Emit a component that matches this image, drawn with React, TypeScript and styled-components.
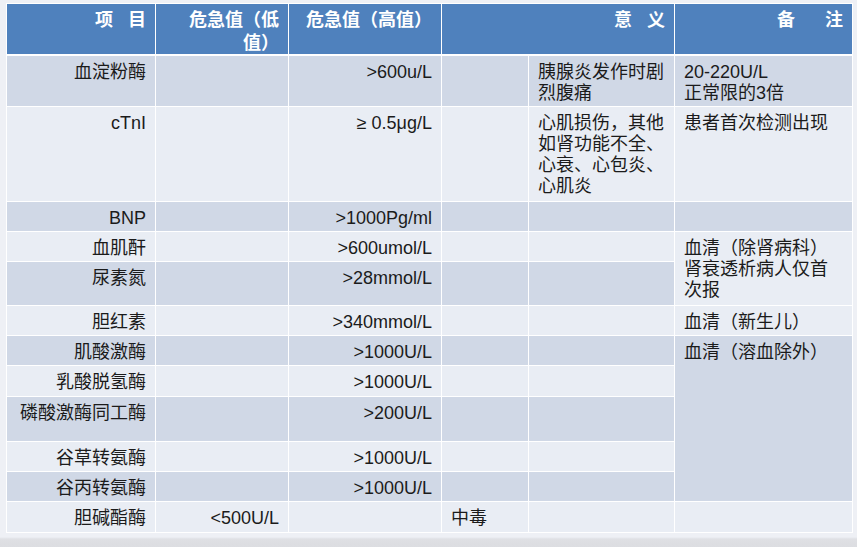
import React from 'react';
import styled, { createGlobalStyle } from 'styled-components';

// ─── Global ────────────────────────────────────────────────────────────────────
const GlobalStyle = createGlobalStyle`
  html, body {
    margin: 0;
    padding: 0;
  }
  body {
    min-height: 547px;
    background: linear-gradient(to bottom, #eef0f5 0, #eef0f5 537px, #dfe0e4 539px, #dcdde1 100%);
    font-family: "Liberation Sans", "Noto Sans CJK SC", sans-serif;
    color: #1b1b1b;
  }
`;

// ─── Layout ────────────────────────────────────────────────────────────────────
const Sheet = styled.div`
  margin: 3px 0 0 6px;
  width: 845px;
  padding: 1px;
  background: #ffffff;
`;

const Grid = styled.div`
  display: grid;
  grid-template-columns: 148px 132px 152px 86px 145px 177px;
  grid-template-rows: 51px 50px 94px 29px 29px 43px 29px 29px 30px 44px 29px 29px 30px;
  gap: 1px;
`;

// ─── Cells ─────────────────────────────────────────────────────────────────────
type Tone = 'head' | 'dark' | 'light';

const toneBg: Record<Tone, string> = {
  head: '#4f81bd',
  dark: '#d0d8e6',
  light: '#e9edf4',
};

const HeadCell = styled.div<{ $span?: number }>`
  grid-column: span ${(p) => p.$span ?? 1};
  height: 50px;
  box-sizing: border-box;
  padding: 5px 9px 0 9px;
  background: ${toneBg.head};
  color: #ffffff;
  font-size: 18px;
  font-weight: 700;
  line-height: 23px;
  text-align: right;
  white-space: pre-wrap;
`;

const Cell = styled.div<{ $tone: Tone; $align?: 'left' | 'right'; $rows?: number; $wide?: boolean }>`
  grid-row: span ${(p) => p.$rows ?? 1};
  box-sizing: border-box;
  padding: ${(p) => (p.$align === 'left' ? (p.$wide ? '6px 20px 0 9px' : '6px 5px 0 9px') : '6px 9px 0 9px')};
  background: ${(p) => toneBg[p.$tone]};
  font-size: 18px;
  line-height: 21px;
  text-align: ${(p) => p.$align ?? 'right'};
  white-space: pre-line;
`;

// ─── Data ──────────────────────────────────────────────────────────────────────
type Row = {
  name: string;
  low?: string;
  high?: string;
  cause?: string;
  meaning?: string;
  note?: { text: string; rows?: number };
};

const heads: { label: string; span?: number }[] = [
  { label: '项   目' },
  { label: '危急值（低值）' },
  { label: '危急值（高值）' },
  { label: '意   义', span: 2 },
  { label: '备      注' },
];

const rows: Row[] = [
  { name: '血淀粉酶', high: '>600u/L', meaning: '胰腺炎发作时剧烈腹痛', note: { text: '20-220U/L\n正常限的3倍' } },
  { name: 'cTnI', high: '≥ 0.5μg/L', meaning: '心肌损伤，其他如肾功能不全、心衰、心包炎、心肌炎', note: { text: '患者首次检测出现' } },
  { name: 'BNP', high: '>1000Pg/ml', note: { text: '' } },
  { name: '血肌酐', high: '>600umol/L', note: { text: '血清（除肾病科）肾衰透析病人仅首次报', rows: 2 } },
  { name: '尿素氮', high: '>28mmol/L' },
  { name: '胆红素', high: '>340mmol/L', note: { text: '血清（新生儿）' } },
  { name: '肌酸激酶', high: '>1000U/L', note: { text: '血清（溶血除外）', rows: 5 } },
  { name: '乳酸脱氢酶', high: '>1000U/L' },
  { name: '磷酸激酶同工酶', high: '>200U/L' },
  { name: '谷草转氨酶', high: '>1000U/L' },
  { name: '谷丙转氨酶', high: '>1000U/L' },
  { name: '胆碱酯酶', low: '<500U/L', cause: '中毒', note: { text: '' } },
];

// ─── Component ─────────────────────────────────────────────────────────────────
export default function App() {
  return (
    <>
      <GlobalStyle />
      <Sheet>
        <Grid>
          {heads.map((h) => (
            <HeadCell key={h.label} $span={h.span}>
              {h.label}
            </HeadCell>
          ))}
          {rows.map((r, idx) => {
            const tone: Tone = idx % 2 === 0 ? 'dark' : 'light';
            return (
              <React.Fragment key={r.name}>
                <Cell $tone={tone}>{r.name}</Cell>
                <Cell $tone={tone}>{r.low}</Cell>
                <Cell $tone={tone}>{r.high}</Cell>
                <Cell $tone={tone} $align="left">{r.cause}</Cell>
                <Cell $tone={tone} $align="left">{r.meaning}</Cell>
                {r.note && (
                  <Cell $tone={tone} $align="left" $wide $rows={r.note.rows}>
                    {r.note.text}
                  </Cell>
                )}
              </React.Fragment>
            );
          })}
        </Grid>
      </Sheet>
    </>
  );
}
